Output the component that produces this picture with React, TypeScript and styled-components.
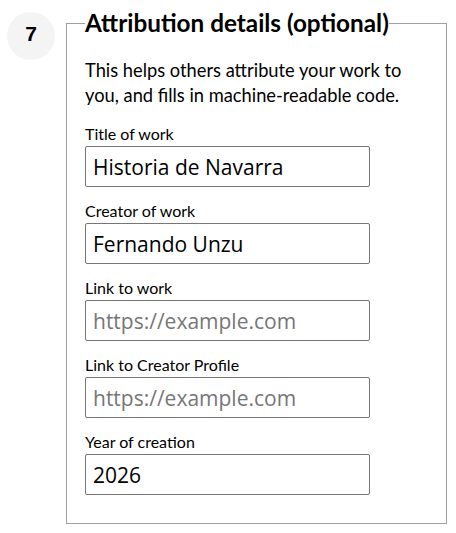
import React from "react";
import styled, { createGlobalStyle } from "styled-components";

const Global = createGlobalStyle`
  html, body { margin: 0; padding: 0; background: #fff; }
  body { font-family: "Lato", "Noto Sans", sans-serif; color: #000; }
  * { box-sizing: border-box; }
`;

const Step = styled.div`
  display: flex;
  align-items: flex-start;
  padding: 12px 9px 0 7px;
`;

const Badge = styled.div`
  flex: 0 0 48px;
  width: 48px;
  height: 48px;
  border-radius: 50%;
  background: #f4f4f4;
  display: flex;
  align-items: center;
  justify-content: center;
  padding-bottom: 4px;
  font-family: "Liberation Sans", Arial, sans-serif;
  font-weight: 700;
  font-size: 21px;
  margin-right: 11px;
`;

const Fieldset = styled.fieldset`
  flex: 1;
  margin: -4px 0 0 0;
  border: 1px solid #a0a0a0;
  padding: 0 18px 28px 18px;
  min-width: 0;
`;

const Legend = styled.legend`
  padding: 0;
  font-weight: 700;
  font-size: 24.3px;
  line-height: 30px;
`;

const Intro = styled.p`
  margin: 20px 0 16px;
  font-size: 18.3px;
  line-height: 25px;
`;

const Field = styled.div<{ $first?: boolean }>`
  display: flex;
  flex-direction: column;
  margin-top: ${(p) => (p.$first ? 0 : 14)}px;
`;

const Label = styled.label`
  font-size: 16px;
  line-height: 20px;
  margin-bottom: 2px;
`;

const Input = styled.input`
  width: 285px;
  height: 41px;
  border: 1px solid #767676;
  border-radius: 2px;
  padding: 0 7px;
  font-family: "Open Sans", "Noto Sans", sans-serif;
  font-size: 21px;
  color: #000;
  background: #fff;
  outline: none;
  &::placeholder { color: #767676; opacity: 1; }
`;

const fields: { id: string; label: string; value?: string; placeholder?: string }[] = [
  { id: "title", label: "Title of work", value: "Historia de Navarra" },
  { id: "creator", label: "Creator of work", value: "Fernando Unzu" },
  { id: "link", label: "Link to work", placeholder: "https://example.com" },
  { id: "profile", label: "Link to Creator Profile", placeholder: "https://example.com" },
  { id: "year", label: "Year of creation", value: "2026" },
];

export default function App() {
  return (
    <>
      <Global />
      <Step>
        <Badge>7</Badge>
        <Fieldset>
          <Legend>Attribution details (optional)</Legend>
          <Intro>
            This helps others attribute your work to you, and fills in machine-readable code.
          </Intro>
          {fields.map((f, i) => (
            <Field key={f.id} $first={i === 0}>
              <Label htmlFor={f.id}>{f.label}</Label>
              <Input id={f.id} defaultValue={f.value} placeholder={f.placeholder} />
            </Field>
          ))}
        </Fieldset>
      </Step>
    </>
  );
}
